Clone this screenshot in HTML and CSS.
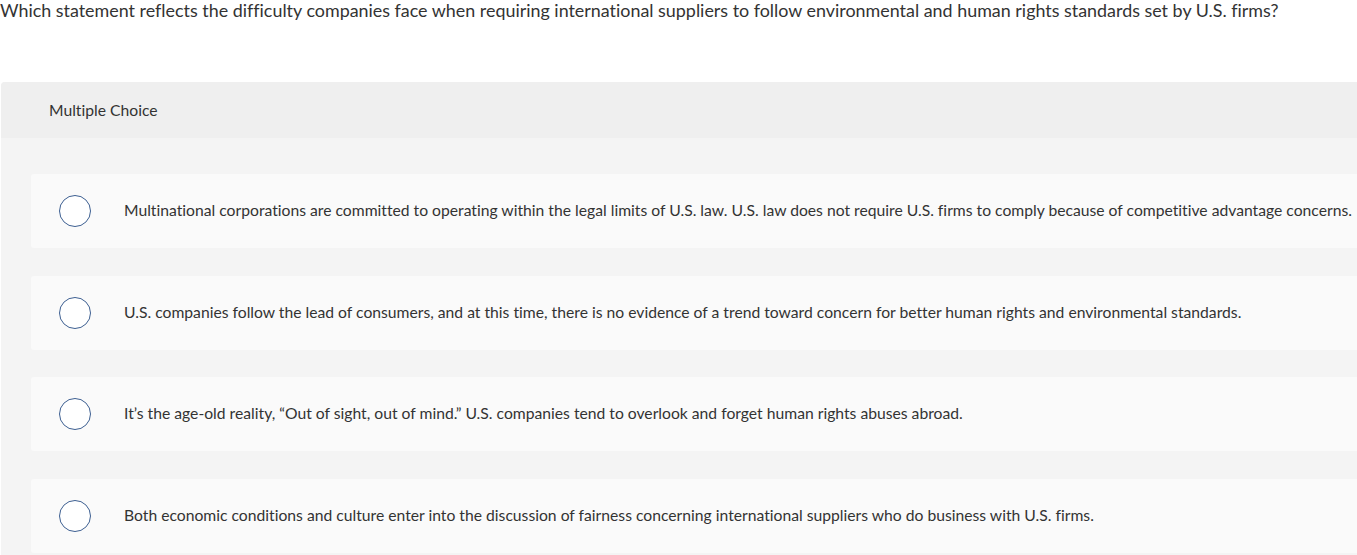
FILE: index.html
```html
<!DOCTYPE html>
<html lang="en">
<head>
<meta charset="utf-8">
<title>Multiple Choice</title>
<link rel="stylesheet" href="styles.css">
</head>
<body>
<p class="question">Which statement reflects the difficulty companies face when requiring international suppliers to follow environmental and human rights standards set by U.S. firms?</p>
<section class="panel">
  <header class="panel-header">Multiple Choice</header>
  <div class="panel-body">
    <label class="choice"><span class="radio"></span><span class="choice-text">Multinational corporations are committed to operating within the legal limits of U.S. law. U.S. law does not require U.S. firms to comply because of competitive advantage concerns.</span></label>
    <label class="choice"><span class="radio"></span><span class="choice-text">U.S. companies follow the lead of consumers, and at this time, there is no evidence of a trend toward concern for better human rights and environmental standards.</span></label>
    <label class="choice"><span class="radio"></span><span class="choice-text">It’s the age-old reality, “Out of sight, out of mind.” U.S. companies tend to overlook and forget human rights abuses abroad.</span></label>
    <label class="choice"><span class="radio"></span><span class="choice-text">Both economic conditions and culture enter into the discussion of fairness concerning international suppliers who do business with U.S. firms.</span></label>
  </div>
</section>
</body>
</html>
```
FILE: styles.css
```css
html, body {
  margin: 0;
  padding: 0;
  background: #ffffff;
  overflow: hidden;
}
body {
  font-family: "Lato", "Liberation Sans", sans-serif;
  font-variant-ligatures: none;
  color: #333333;
}
.question {
  margin: 0;
  padding: 0;
  height: 82px;
  font-size: 17.9px;
  line-height: 20px;
  white-space: nowrap;
}
.panel {
  margin-left: 1px;
  background: #f4f4f4;
  border-radius: 4px 0 0 0;
}
.panel-header {
  height: 56px;
  display: flex;
  align-items: center;
  padding-left: 48px;
  background: #efefef;
  border-radius: 4px 0 0 0;
  font-size: 15.7px;
}
.panel-body {
  padding: 36px 0 2px 30px;
  display: flex;
  flex-direction: column;
  gap: 27.6px;
}
.choice {
  display: flex;
  align-items: center;
  height: 74px;
  background: #fafafa;
  border-radius: 3px 0 0 3px;
  padding-left: 28px;
  white-space: nowrap;
}
.radio {
  flex: none;
  box-sizing: border-box;
  width: 32px;
  height: 32px;
  border-radius: 50%;
  border: 1.5px solid #3d5f91;
  background: #ffffff;
  margin-right: 33px;
}
.choice-text {
  font-size: 15.7px;
  line-height: 20px;
  margin-top: -2px;
}
```
